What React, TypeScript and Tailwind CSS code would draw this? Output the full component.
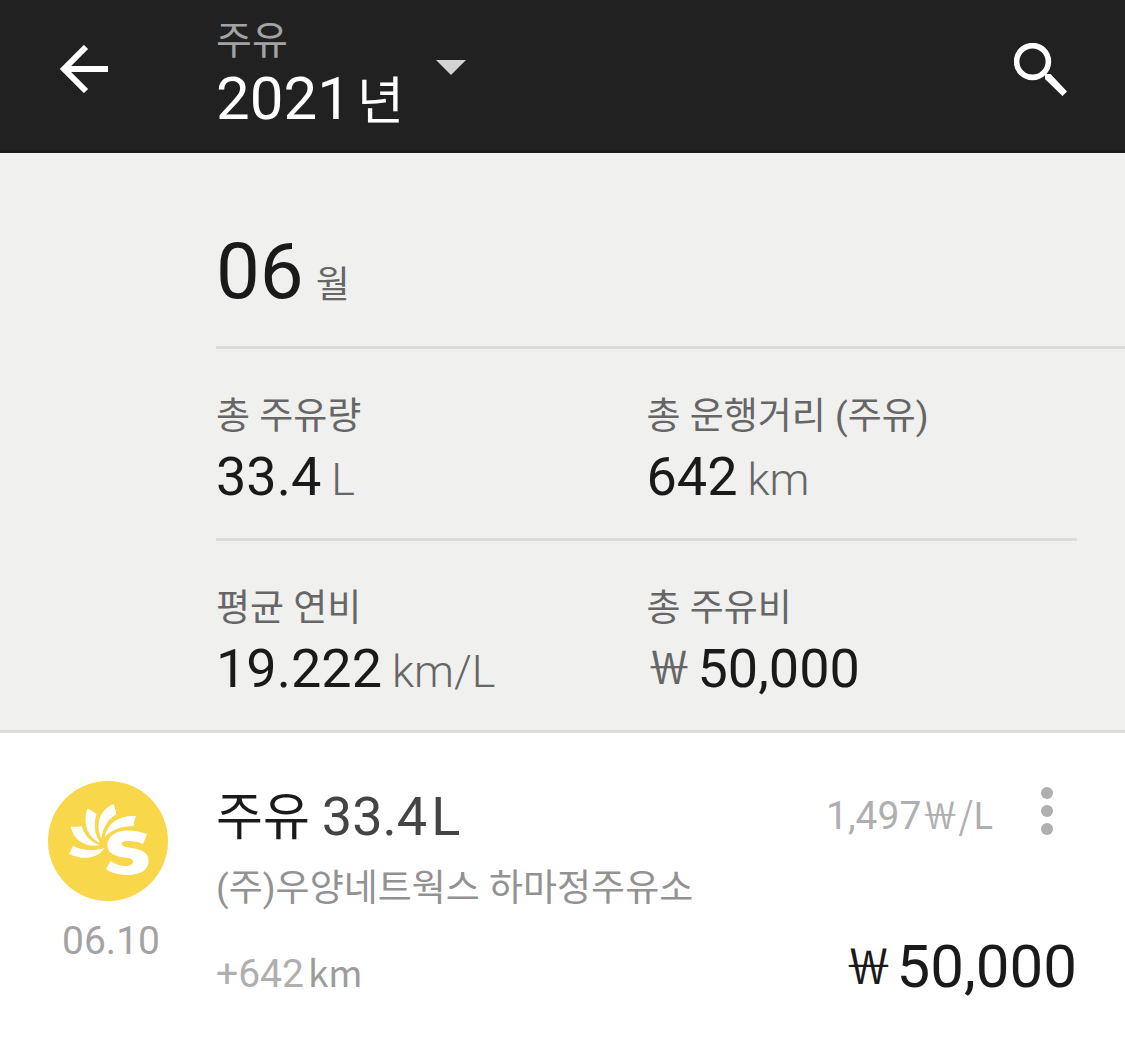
import React from "react";

const stats = [
  { label: "총 주유량", value: "33.4", unit: "L" },
  { label: "총 운행거리 (주유)", value: "642", unit: "km" },
  { label: "평균 연비", value: "19.222", unit: "km/L" },
  { label: "총 주유비", value: "50,000", prefix: "￦" },
];

const records = [
  {
    date: "06.10",
    type: "주유",
    volume: "33.4",
    station: "(주)우양네트웍스 하마정주유소",
    distance: "+642",
    unitPrice: "1,497",
    total: "50,000",
  },
];

function BackIcon() {
  return (
    <svg viewBox="0 0 48 48" className="w-12 h-12" fill="none" stroke="currentColor" strokeWidth="6" aria-hidden="true">
      <path d="M48 24H6" />
      <path d="M26 2 4 24l22 22" />
    </svg>
  );
}

function SearchIcon() {
  return (
    <svg viewBox="0 0 54 54" className="w-[54px] h-[54px]" aria-hidden="true">
      <circle cx="18.5" cy="18.5" r="15.9" fill="none" stroke="currentColor" strokeWidth="5.6" />
      <path d="M31 36V31.500L29.500 30 31 29l1.500 2H36.500L53 48.500 48.500 53z" fill="currentColor" />
    </svg>
  );
}

function StationLogo() {
  return (
    <svg viewBox="0 0 360 360" className="w-[120px] h-[120px]" role="img" aria-label="주유소">
      <circle cx="180" cy="180" r="180" fill="#f8d74a" />
      <g fill="#fff" transform="translate(48 57)">
        <path d="M26 138C24 145 20 153 15 161C35 172 60 176 80 172C98 168 112 158 122 144C90 154 55 152 26 138z" />
        <path d="M20 80C35 81 45 81 53 78C60 105 78 125 108 136C60 142 30 120 20 80z" />
        <path d="M70 26C80 29 90 36 98 42C88 70 92 105 108 128C70 112 56 70 70 26z" />
        <path d="M149 12C152 22 156 35 157 43C135 55 118 78 112 116C94 75 105 30 149 12z" />
        <path d="M216 48C212 58 209 68 209 78C175 78 142 88 122 112C130 68 165 45 216 48z" />
        <path d="M249 103L237 132C225 126 205 122 188 123C170 124 168 136 184 140C200 144 225 145 240 156C258 168 258 195 242 210C226 225 190 228 162 222C145 219 133 214 126 207L140 183C152 192 170 198 186 198C202 198 209 190 207 183C205 175 192 174 176 172C150 168 130 158 130 136C130 112 150 95 180 92C205 91 232 95 249 103z" />
      </g>
    </svg>
  );
}

function Header() {
  return (
    <header className="flex bg-[#212121] border-b-3 border-[#1a1a1c] text-white">
      <div className="w-[216px] shrink-0 pt-[45px] pl-[60px]">
        <button type="button" aria-label="뒤로" className="block">
          <BackIcon />
        </button>
      </div>
      <button type="button" aria-haspopup="listbox" className="flex gap-8 pt-[18px] pb-4 text-left">
        <span className="block">
          <span className="block text-[39px] leading-[46px] text-[#a3a3a3]">주유</span>
          <span className="flex items-baseline gap-1.5 leading-[70px]">
            <span className="text-[60px]">2021</span>
            <span className="text-[51px] leading-none">년</span>
          </span>
        </span>
        <svg viewBox="0 0 30 15" className="w-[30px] h-[15px] mt-[42px]" aria-hidden="true">
          <path d="M0 0h30L15 15z" fill="#d3d3d3" />
        </svg>
      </button>
      <button type="button" aria-label="검색" className="ml-auto mr-[57px] mt-[43px] self-start">
        <SearchIcon />
      </button>
    </header>
  );
}

function MonthSummary() {
  return (
    <section className="bg-[#f0f0ef] border-b-3 border-[#dcdcdb] pl-[216px]">
      <h2 className="flex items-baseline gap-3 pt-[71px] pb-[26px] leading-[96px] border-b-3 border-[#dcdcda]">
        <span className="text-[78px]">06</span>
        <span className="text-[37px] leading-none text-[#666]">월</span>
      </h2>
      <dl className="grid grid-cols-2 mr-12">
        {stats.map((stat, i) => (
          <div key={stat.label} className={i < 2 ? "h-48 pt-11 border-b-3 border-[#dcdcda]" : "pt-11 pb-[25px]"}>
            <dt className="text-[37px] leading-[48px] text-[#666]">{stat.label}</dt>
            <dd className="flex items-baseline leading-[72px]">
              {stat.prefix && <span className="self-start mr-1.5 text-[45px] text-[#666]">{stat.prefix}</span>}
              <span className="text-[54px]">{stat.value}</span>
              {stat.unit && <span className="ml-2.5 text-[45px] leading-none font-light text-[#666]">{stat.unit}</span>}
            </dd>
          </div>
        ))}
      </dl>
    </section>
  );
}

function RecordRow({ record }: { record: (typeof records)[number] }) {
  return (
    <li className="flex pt-12 pb-10">
      <div className="w-[216px] shrink-0 pl-12">
        <StationLogo />
        <p className="w-[126px] text-center text-[39px] leading-[48px] mt-4 text-[#a3a3a3]">{record.date}</p>
      </div>
      <div className="flex-1 mr-12">
        <div className="flex items-start justify-between">
          <h3 className="flex items-baseline leading-[72px]">
            <span className="text-[51px] leading-none">{record.type}</span>
            <span className="text-[54px] ml-3 text-[#444]">{record.volume}</span>
            <span className="text-[54px] ml-1 text-[#444]">L</span>
          </h3>
          <div className="flex items-start pt-1.5">
            <p className="flex items-baseline text-[39px] leading-[58px] text-[#afafaf]">
              {record.unitPrice}
              <span className="font-['Noto_Sans_CJK_KR',sans-serif] text-[37px] leading-none">￦/L</span>
            </p>
            <button type="button" aria-label="더보기" className="ml-12 mr-6">
              <svg viewBox="0 0 12 48" className="w-3 h-12" fill="#afafaf" aria-hidden="true">
                <circle cx="6" cy="6" r="6" />
                <circle cx="6" cy="24" r="6" />
                <circle cx="6" cy="42" r="6" />
              </svg>
            </button>
          </div>
        </div>
        <p className="text-[37px] leading-[48px] mt-3 text-[#929292]">{record.station}</p>
        <div className="flex items-baseline justify-between mt-[18px] leading-[72px]">
          <p className="flex items-baseline gap-1 text-[39px] text-[#afafaf]">
            <span>{record.distance}</span>
            <span className="font-['Noto_Sans_CJK_KR',sans-serif] text-[37px] leading-none text-[#9c9c9c]">km</span>
          </p>
          <p className="flex items-baseline gap-1">
            <span className="self-start text-[48px]">￦</span>
            <span className="text-[60px]">{record.total}</span>
          </p>
        </div>
      </div>
    </li>
  );
}

export default function App() {
  return (
    <div className="min-h-screen bg-white text-[#1a1a1a] font-['Roboto','Noto_Sans_CJK_KR',sans-serif]">
      <Header />
      <main>
        <MonthSummary />
        <ul>
          {records.map((record) => (
            <RecordRow key={record.date} record={record} />
          ))}
        </ul>
      </main>
    </div>
  );
}
